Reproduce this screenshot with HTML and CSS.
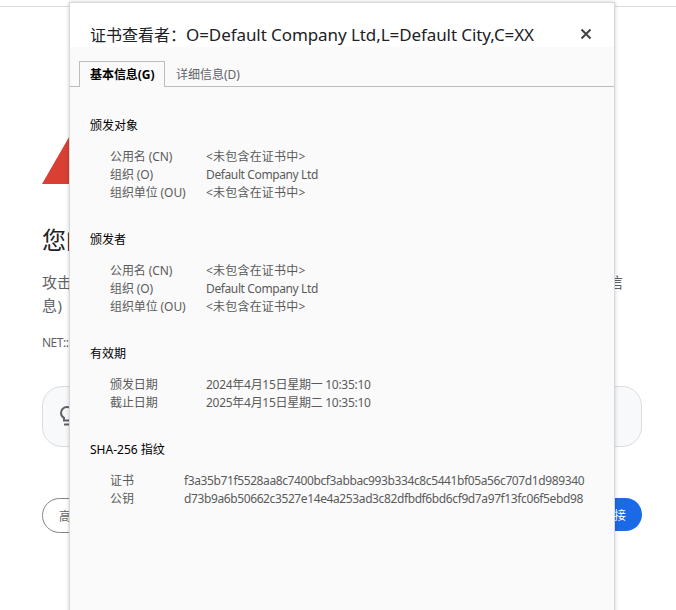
FILE: index.html
```html
<!DOCTYPE html>
<html lang="zh-CN">
<head>
<meta charset="utf-8">
<title>证书查看者</title>
<link rel="stylesheet" href="styles.css">
</head>
<body>
<main class="page">
  <div class="warning">
    <svg class="warning-icon" width="72" height="64" viewBox="0 0 72 64"><path d="M0 63L36 0.5L72 63Z" fill="#d93f33"/></svg>
    <h1 class="warning-title">您的</h1>
    <div class="warning-text"><span>攻击</span><span class="text-end">信</span></div>
    <div class="warning-text second">息)</div>
    <div class="error-code">NET::</div>
    <div class="tip">
      <svg width="24" height="24" viewBox="0 0 24 24" fill="none" stroke="#5f6368" stroke-width="2"><path d="M9 16.5v-2.600C7.100 12.800 6 11.100 6 9a6 6 0 0 1 12 0c0 2.100-1.100 3.800-3 4.900v2.600zM9 20.500h6"/></svg>
    </div>
    <div class="actions"><button class="button">高</button><button class="button primary">接</button></div>
  </div>
</main>
<section class="dialog">
  <header class="dialog-header">
    <h2 class="dialog-title"><span class="title-label">证书查看者：</span><span class="title-name">O=Default Company Ltd,L=Default City,C=XX</span></h2>
    <svg class="close" width="12" height="12" viewBox="0 0 12 12" stroke="#424242" stroke-width="2"><path d="M1.500 1.500l9 9M10.500 1.500l-9 9"/></svg>
  </header>
  <nav class="tabs"><div class="tab active">基本信息(G)</div><div class="tab">详细信息(D)</div></nav>
  <div class="content">
    <section class="group">
      <h3>颁发对象</h3>
      <dl>
        <dt>公用名 (CN)</dt><dd class="missing">&lt;未包含在证书中&gt;</dd>
        <dt>组织 (O)</dt><dd class="latin">Default Company Ltd</dd>
        <dt>组织单位 (OU)</dt><dd class="missing">&lt;未包含在证书中&gt;</dd>
      </dl>
    </section>
    <section class="group">
      <h3>颁发者</h3>
      <dl>
        <dt>公用名 (CN)</dt><dd class="missing">&lt;未包含在证书中&gt;</dd>
        <dt>组织 (O)</dt><dd class="latin">Default Company Ltd</dd>
        <dt>组织单位 (OU)</dt><dd class="missing">&lt;未包含在证书中&gt;</dd>
      </dl>
    </section>
    <section class="group">
      <h3>有效期</h3>
      <dl>
        <dt>颁发日期</dt><dd class="date">2024年4月15日星期一 10:35:10</dd>
        <dt>截止日期</dt><dd class="date">2025年4月15日星期二 10:35:10</dd>
      </dl>
    </section>
    <section class="group">
      <h3>SHA-256 指纹</h3>
      <dl class="fingerprints">
        <dt>证书</dt><dd>f3a35b71f5528aa8c7400bcf3abbac993b334c8c5441bf05a56c707d1d989340</dd>
        <dt>公钥</dt><dd>d73b9a6b50662c3527e14e4a253ad3c82dfbdf6bd6cf9d7a97f13fc06f5ebd98</dd>
      </dl>
    </section>
  </div>
</section>
</body>
</html>
```
FILE: styles.css
```css
* { box-sizing: border-box; }
html, body { height: 100%; }
body {
  margin: 0;
  overflow: hidden;
  position: relative;
  background: #fff;
  color: #5f6368;
  font: 12px/18px "Noto Sans", "Noto Sans CJK SC", sans-serif;
}
h1, h2, h3, dl, dd { margin: 0; font-weight: 400; }
svg { display: block; flex: none; }

.page { padding-top: 6px; }
.page::before { content: ""; display: block; height: 1px; background: #dadce0; }
.warning { width: 600px; margin: 0 0 0 42px; padding-top: 114px; }
.warning-title { margin-top: 37px; font-size: 24px; line-height: 36px; color: #202124; }
.warning-text { display: flex; justify-content: space-between; font-size: 15px; line-height: 24px; }
.warning-title + .warning-text { margin-top: 12px; }
.warning-text.second { line-height: 23px; letter-spacing: 0.5px; }
.text-end { margin-right: 19px; }
.error-code { margin-top: 17px; letter-spacing: -0.5px; }
.tip {
  display: flex;
  align-items: center;
  height: 61px;
  margin-top: 34px;
  padding-left: 12px;
  border: 1px solid #dadce0;
  border-radius: 20px;
  background: #f8f9fa;
}
.tip svg { margin-top: -2px; }
.actions { display: flex; justify-content: space-between; margin-top: 51px; }
.button {
  height: 35px;
  padding: 2px 16px 0;
  border: 1px solid #80868b;
  border-radius: 18px;
  background: #fff;
  color: #5f6368;
  font: inherit;
  width: 80px;
  text-align: left;
}
.button.primary { height: 33px; border: 0; background: #1a6ae8; color: #fff; text-align: right; }

.dialog {
  position: absolute;
  top: 2px;
  left: 69px;
  width: 546px;
  height: 620px;
  border: 1px solid #d7d8d9;
  background: #fafafa;
  box-shadow: 0 0 4px rgba(0, 0, 0, .2);
}
.dialog-header {
  display: flex;
  align-items: center;
  justify-content: space-between;
  height: 44px;
  padding: 19px 22px 0 20px;
  background: #fff;
  color: #202124;
}
.dialog-title { font-size: 16px; line-height: 24px; white-space: nowrap; }
.title-name { font-size: 17px; letter-spacing: -0.08px; }
.close { margin-top: -2px; }
.tabs { display: flex; height: 40px; padding: 14px 0 0; }
.tabs::before { content: ""; width: 9px; border-bottom: 1px solid #bdbdbd; }
.tabs::after { content: ""; flex: 1; border-bottom: 1px solid #bdbdbd; }
.tab {
  width: 86px;
  padding: 5px 0 0 11px;
  border-bottom: 1px solid #bdbdbd;
  white-space: nowrap;
}
.tab.active {
  padding: 4px 0 0 10px;
  border: 1px solid #bdbdbd;
  border-bottom: 0;
  color: #000;
  font-weight: 700;
  letter-spacing: -0.05px;
}
.content { display: flex; flex-direction: column; gap: 28px; padding: 30px 20px 0; }
.group h3 { font-size: 12px; line-height: 18px; color: #000; }
.group dl {
  display: grid;
  grid-template-columns: 96px 1fr;
  margin-top: 13px;
  margin-bottom: 1px;
  padding-left: 20px;
  color: #5a5a5a;
  white-space: nowrap;
}
.group dt { letter-spacing: -0.1px; }
.missing { letter-spacing: 0.2px; }
.latin { letter-spacing: -0.38px; }
.date { letter-spacing: -0.28px; }
.group .fingerprints { grid-template-columns: 74px 1fr; letter-spacing: -0.39px; }
```
